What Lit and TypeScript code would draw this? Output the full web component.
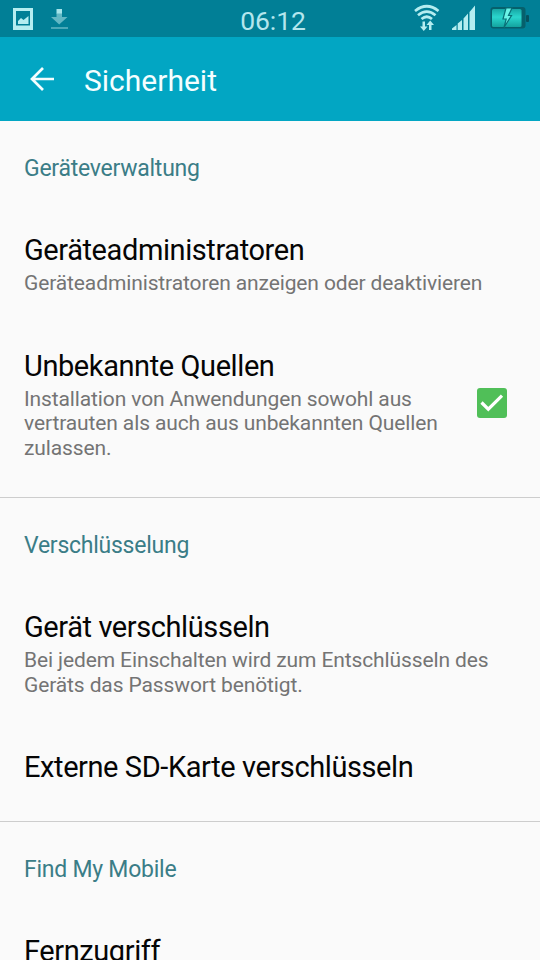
import { LitElement, html, css, nothing } from "lit";
import { customElement } from "lit/decorators.js";

interface Entry { title: string; lines?: string[]; checked?: boolean; }
interface Section { heading: string; entries: Entry[]; }

const sections: Section[] = [
  {
    heading: "Geräteverwaltung",
    entries: [
      { title: "Geräteadministratoren", lines: ["Geräteadministratoren anzeigen oder deaktivieren"] },
      {
        title: "Unbekannte Quellen",
        lines: ["Installation von Anwendungen sowohl aus", "vertrauten als auch aus unbekannten Quellen", "zulassen."],
        checked: true,
      },
    ],
  },
  {
    heading: "Verschlüsselung",
    entries: [
      { title: "Gerät verschlüsseln", lines: ["Bei jedem Einschalten wird zum Entschlüsseln des", "Geräts das Passwort benötigt."] },
      { title: "Externe SD-Karte verschlüsseln" },
    ],
  },
  { heading: "Find My Mobile", entries: [{ title: "Fernzugriff" }] },
];

@customElement("app-root")
export class AppRoot extends LitElement {
  static styles = css`
    :host { display: block; width: 540px; height: 960px; overflow: hidden; background: #fafafa; font-family: Roboto, "Noto Sans", sans-serif; color: #050505; }
    * { box-sizing: border-box; }
    svg { display: block; flex: none; }
    .status { height: 37px; background: #017f96; display: grid; grid-template-columns: 1fr auto 1fr; align-items: center; }
    .clock { font-size: 26.5px; line-height: 33px; color: #b4e6ed; padding: 3px 0 0 6px; font-weight: 400; letter-spacing: -0.1px; }
    .right { justify-self: end; }
    .bar { height: 84px; background: #02a6c3; display: flex; align-items: center; padding: 2px 0 0 29px; gap: 29px; color: #f4feff; font-size: 30px; }
    .bar svg { margin-top: -2px; }
    .section { border-bottom: 1px solid #cdcdcd; padding: 34px 0 36px; }
    .section:last-child { border-bottom: 0; }
    h2 { margin: 0 0 49px; padding-left: 24px; font-size: 23px; line-height: 28px; letter-spacing: -0.25px; font-weight: 400; color: #3b7d87; }
    .row { display: flex; align-items: center; justify-content: space-between; padding: 0 33px 0 24px; }
    .row + .row { margin-top: 52px; }
    .title { font-size: 29px; line-height: 36px; letter-spacing: -0.41px; white-space: nowrap; }
    .sub { margin-top: 3px; font-size: 21px; line-height: 24.5px; letter-spacing: -0.12px; color: #747474; white-space: nowrap; }
    .row:last-child .sub { margin-bottom: 1px; }
    .check { margin-top: -2px; }
  `;

  private row(e: Entry) {
    return html`<div class="row">
      <div>
        <div class="title">${e.title}</div>
        ${e.lines ? html`<div class="sub">${e.lines.map((l) => html`<div>${l}</div>`)}</div>` : nothing}
      </div>
      ${e.checked
        ? html`<svg class="check" width="30" height="30" viewBox="0 0 30 30"><rect width="30" height="30" rx="3" fill="#50bf58"/><path d="M4.500 14.500 11.300 21.200 25 7.700" fill="none" stroke="#fff" stroke-width="3.200"/></svg>`
        : nothing}
    </div>`;
  }

  render() {
    return html`
      <div class="status">
        <svg width="90" height="37" viewBox="0 0 90 37">
          <path fill="#b5edf0" fill-rule="evenodd" d="M13 8h20v22H13zM16 11v14.500h14V11z"/>
          <path fill="#b5edf0" d="M18 24v-3l3-3 2.500 2 5-4v8z"/>
          <path fill="#62b7c4" d="M56.500 13h5.500v4h5.500L59.200 24.500 51 17h5.500z"/>
          <path fill="#a5e4ea" d="M56.500 9h5.500v4.500h-5.500z"/>
          <path fill="#4aa9b8" d="M51 27h17v2H51z"/>
        </svg>
        <div class="clock">06:12</div>
        <svg class="right" width="140" height="37" viewBox="0 0 140 37">
          <defs>
            <linearGradient id="cell" x1="0" y1="0" x2="0" y2="1"><stop offset="0" stop-color="#17a7a5"/><stop offset=".45" stop-color="#2bd6cd"/><stop offset="1" stop-color="#13a39f"/></linearGradient>
          </defs>
          <g fill="none" stroke="#b5edf0" stroke-width="2.700">
            <path d="M15 11Q26.800 1.500 38.500 11"/>
            <path d="M18 15.300Q26.800 8 35.500 15.300"/>
            <path d="M21.500 19Q26.800 14.500 32 19"/>
          </g>
          <path fill="#b5edf0" d="M22.500 21.500h2.500v5h2.500L23.800 31 20 26.500h2.500zM29 30v-5h-2.500L30.200 20.500 34 25h-2.500v5z"/>
          <path fill="#b5edf0" d="M52 30v-1.500l4.500-3.500v5zM57.700 30v-6.500l4.300-3.500v10zM63.500 30V18.500l4.500-5V30zM69.500 30V12l5.500-6.500V30z"/>
          <rect x="90.500" y="7" width="35" height="21.500" rx="3" fill="#06606c"/>
          <rect x="126" y="15" width="3" height="7" rx="1" fill="#06515e"/>
          <rect x="92" y="9" width="29.500" height="18" rx="1.500" fill="url(#cell)"/>
          <path fill="#6af3e6" stroke="#087078" stroke-width="1.200" d="M106 8 103 19h3.200L104 27.500 111.500 15.500h-3L112 8z"/>
        </svg>
      </div>
      <div class="bar">
        <svg width="26" height="26" viewBox="0 0 26 26" fill="none" stroke="#f4feff" stroke-width="2.700"><path d="M25 13H3M14 2 3 13 14 24"/></svg>
        <span>Sicherheit</span>
      </div>
      ${sections.map((s) => html`<div class="section"><h2>${s.heading}</h2>${s.entries.map((e) => this.row(e))}</div>`)}
    `;
  }
}
